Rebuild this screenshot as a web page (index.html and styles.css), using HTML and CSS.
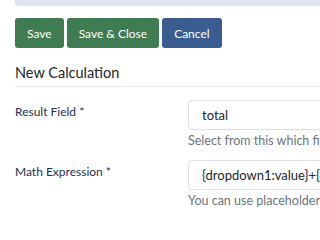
FILE: index.html
```html
<!DOCTYPE html>
<html>
<head>
<meta charset="utf-8">
<link rel="stylesheet" href="styles.css">
</head>
<body>
<div class="page">
  <div class="topbar"></div>
  <div class="toolbar">
    <button class="btn btn-green">Save</button>
    <button class="btn btn-green">Save &amp; Close</button>
    <button class="btn btn-blue">Cancel</button>
  </div>
  <h2 class="title">New Calculation</h2>
  <div class="row">
    <label class="label">Result Field *</label>
    <div class="control">
      <div class="input">total</div>
      <div class="help">Select from this which field the result will be stored in</div>
    </div>
  </div>
  <div class="row">
    <label class="label">Math Expression *</label>
    <div class="control">
      <div class="input">{dropdown1:value}+{dropdown2:value}</div>
      <div class="help">You can use placeholders to build the expression</div>
    </div>
  </div>
</div>
</body>
</html>
```
FILE: styles.css
```css
html, body {
  margin: 0;
  padding: 0;
  background: #ffffff;
  overflow: hidden;
}
.page {
  width: 520px;
  padding: 0 0 0 15px;
  font-family: Lato, "Liberation Sans", sans-serif;
  color: #22262a;
}
.topbar {
  height: 6px;
  background: #dfe4f1;
  border-radius: 0 0 4px 4px;
}
.toolbar {
  display: flex;
  gap: 3px;
  margin-top: 12px;
}
.btn {
  height: 30px;
  border: none;
  border-radius: 3px;
  padding: 0 12px;
  font-family: Lato, "Liberation Sans", sans-serif;
  font-size: 12px;
  color: #ffffff;
}
.btn-green {
  background: #3f7c53;
}
.btn-blue {
  background: #3a5c91;
}
.title {
  margin: 15px 0 0 0;
  padding-bottom: 3px;
  font-weight: 400;
  font-size: 14.5px;
  line-height: 20px;
  color: #22262a;
  border-bottom: 1px solid #e4e6ea;
}
.row {
  display: flex;
  margin-top: 13px;
}
.row + .row {
  margin-top: 11px;
}
.label {
  width: 173px;
  flex: none;
  font-size: 12px;
  line-height: 16px;
  padding-top: 4px;
  color: #1e2f52;
}
.control {
  flex: 1;
}
.input {
  height: 28px;
  border: 1px solid #dcdfe4;
  border-radius: 4px;
  padding: 0 12px 0 13px;
  font-size: 13px;
  line-height: 28px;
  color: #22262a;
  white-space: nowrap;
  overflow: hidden;
}
.help {
  margin-top: 3px;
  font-size: 12.5px;
  line-height: 16px;
  color: #6b7480;
  white-space: nowrap;
}
```
